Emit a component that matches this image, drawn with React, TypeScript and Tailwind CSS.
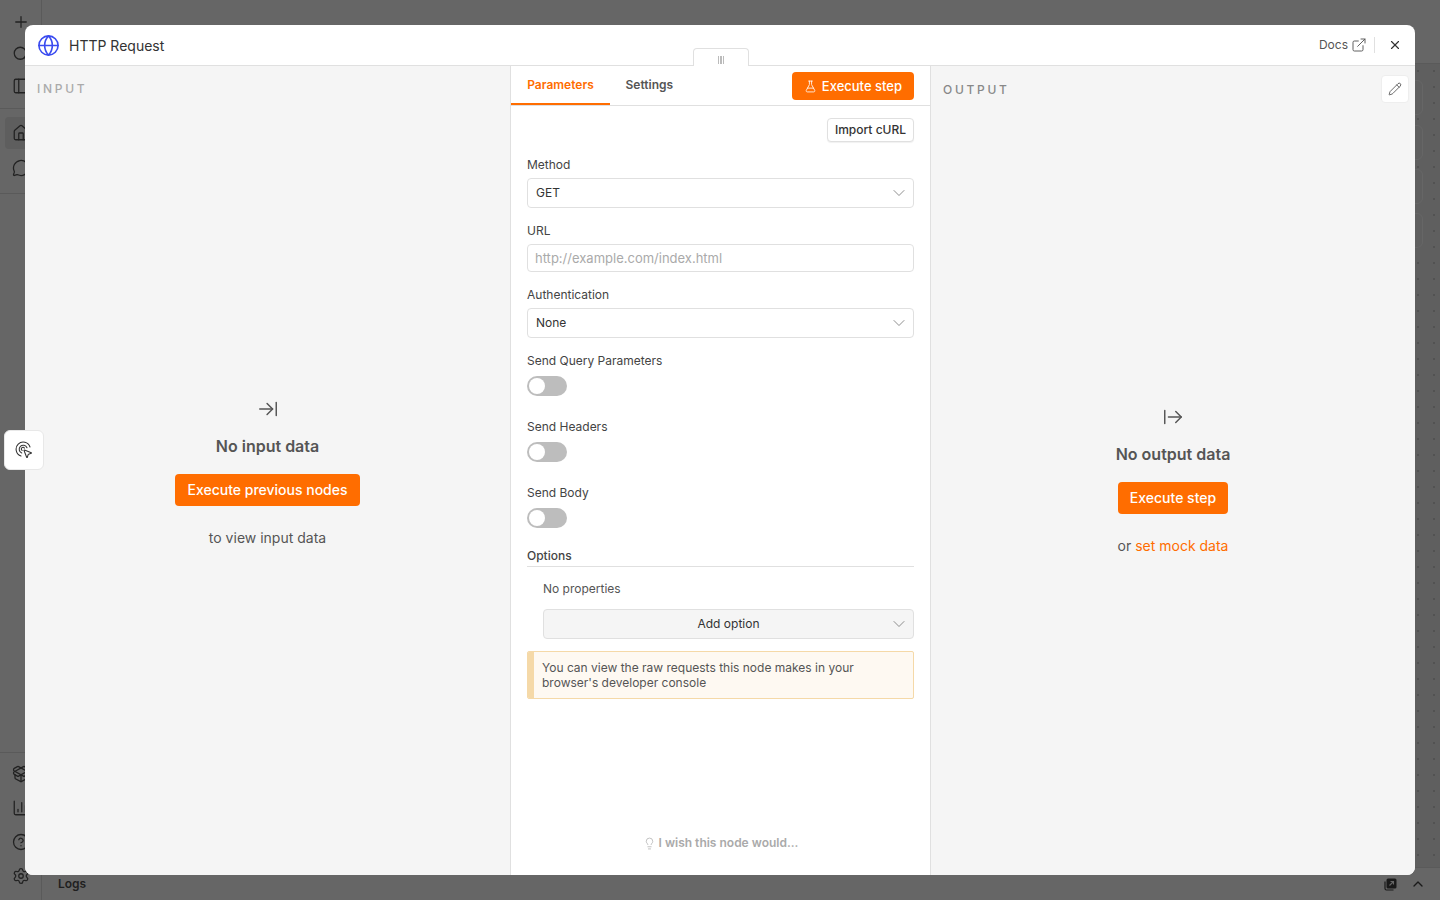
import type { ReactNode } from "react";
import {
  ChevronDown,
  ChevronUp,
  CircleHelp,
  ChartColumn,
  ExternalLink,
  FlaskConical,
  Globe,
  House,
  Lightbulb,
  MessageCircle,
  PanelLeft,
  Pencil,
  Plus,
  Search,
  Settings,
  X,
  ArrowRightToLine,
  ArrowRightFromLine,
  PackageOpen,
} from "lucide-react";

function Field({ label, children }: { label: string; children: ReactNode }) {
  return (
    <div>
      <div className="h-[20px] text-[12px] leading-[14px] text-[#444]">{label}</div>
      {children}
    </div>
  );
}

function SelectBox({ value }: { value: string }) {
  return (
    <div className="flex h-[30px] items-center justify-between rounded-[4px] border border-[#e0e0e0] bg-white pl-[8px] pr-[4px] text-[12px] text-[#333]">
      <span>{value}</span>
      <ChevronDown size={20} strokeWidth={1} className="text-[#777]" />
    </div>
  );
}

function Toggle() {
  return (
    <div className="h-[20px] w-[40px] rounded-full bg-[#bdbdbd] p-[2px]">
      <div className="h-[16px] w-[16px] rounded-full bg-white" />
    </div>
  );
}

export default function App() {
  return (
    <div className="relative flex h-[900px] w-[1440px] overflow-hidden bg-[#666] font-['Inter',sans-serif]">
      {/* page behind the modal */}
      <aside className="flex h-full w-[42px] shrink-0 flex-col items-center border-r border-[#5a5a5a] text-[#222]">
        <div className="flex w-full flex-col items-center gap-[14px] border-b border-[#5a5a5a] py-[13px]">
          <Plus size={18} strokeWidth={1.7} />
          <Search size={18} strokeWidth={1.7} />
          <PanelLeft size={18} strokeWidth={1.7} />
        </div>
        <div className="mt-[8px] flex w-full flex-col items-center gap-[3px] border-b border-[#5a5a5a] pb-[9px]">
          <div className="flex h-[32px] w-[32px] items-center justify-center rounded-[4px] bg-[#5e5e5e]">
            <House size={18} strokeWidth={1.7} />
          </div>
          <div className="flex h-[32px] w-[32px] items-center justify-center">
            <MessageCircle size={18} strokeWidth={1.7} />
          </div>
        </div>
        <div className="mt-auto flex w-full flex-col items-center gap-[16px] border-t border-[#5a5a5a] pb-[15px] pt-[12px]">
          <PackageOpen size={18} strokeWidth={1.7} />
          <ChartColumn size={18} strokeWidth={1.7} />
          <CircleHelp size={18} strokeWidth={1.7} />
          <Settings size={18} strokeWidth={1.7} />
        </div>
      </aside>

      <main className="flex min-w-0 flex-1 flex-col">
        <div className="h-[64px] shrink-0 border-b border-[#5a5a5a]" />
        {/* canvas nodes peeking out on the right */}
        <div className="relative min-h-0 flex-1 bg-[#5f5f5f] [background-image:radial-gradient(#525252_0.8px,transparent_0.8px)] [background-position:-8px_-1px] [background-size:16px_16px]">
          <div className="absolute right-[17px] top-[16px] h-[35px] w-[30px] rounded-[6px] border border-[#666] bg-[#5f5f5f]" />
          <div className="absolute right-[17px] top-[61px] h-[35px] w-[30px] rounded-[6px] border border-[#666] bg-[#5f5f5f]" />
          <div className="absolute right-[17px] top-[105px] h-[35px] w-[30px] rounded-[6px] border border-[#666] bg-[#5f5f5f]" />
          <div className="absolute right-[17px] top-[149px] h-[35px] w-[30px] rounded-[6px] border border-[#666] bg-[#5f5f5f]" />
        </div>
        {/* logs bar */}
        <div className="flex h-[33px] shrink-0 items-center justify-between border-t border-[#5a5a5a] bg-[#666] pl-[16px] pr-[14px]">
          <span className="text-[12px] font-semibold text-[#1f1f1f]">Logs</span>
          <div className="flex items-center gap-[13px] text-[#1a1a1a]">
            <svg width="13" height="13" viewBox="0 0 13 13" fill="none">
              <path d="M1 3.5v7A1.5 1.5 0 0 0 2.5 12h7" stroke="currentColor" strokeWidth="1.2" />
              <rect x="2.5" y="0.5" width="10" height="10" rx="1.5" fill="currentColor" />
              <path d="M5.5 7.5 9.5 3.5M6.5 3.5h3v3" stroke="#666" strokeWidth="1.1" />
            </svg>
            <ChevronUp size={16} strokeWidth={2} />
          </div>
        </div>
      </main>

      {/* modal */}
      <div className="absolute left-[25px] top-[25px] flex h-[850px] w-[1390px] flex-col overflow-hidden rounded-[8px] bg-white">
        <header className="flex h-[41px] shrink-0 items-center justify-between border-b border-[#e0e0e0] pl-[12px] pr-[13px]">
          <div className="flex items-center gap-[9px]">
            <Globe size={23} strokeWidth={1.7} className="text-[#3b4cf0]" />
            <span className="text-[14px] text-[#333]">HTTP Request</span>
          </div>
          <div className="flex items-center text-[#555]">
            <span className="text-[12px]">Docs</span>
            <ExternalLink size={16} strokeWidth={1.4} className="ml-[3px]" />
            <div className="ml-[7px] mr-[13px] h-[16px] w-px bg-[#e0e0e0]" />
            <X size={14} strokeWidth={2} className="text-[#333]" />
          </div>
        </header>

        <div className="flex min-h-0 flex-1">
          {/* input */}
          <section className="relative flex w-[485px] shrink-0 flex-col bg-[#f5f5f5]">
            <div className="pl-[12px] pt-[15px] text-[12px] font-medium leading-[15px] tracking-[2.7px] text-[#aaa]">INPUT</div>
            <div className="mt-[302px] flex flex-col items-center">
              <ArrowRightToLine size={22} strokeWidth={1.6} className="text-[#555]" />
              <div className="mt-[16px] text-[16px] font-semibold leading-[20px] text-[#555]">No input data</div>
              <button className="mt-[18px] flex h-[32px] items-center rounded-[4px] bg-[#ff6d00] px-[12px] pb-[1px] text-[14px] font-medium text-white">
                Execute previous nodes
              </button>
              <div className="mt-[22px] text-[14px] leading-[20px] text-[#555]">to view input data</div>
            </div>
          </section>

          {/* parameters */}
          <section className="flex w-[421px] shrink-0 flex-col border-x border-[#e0e0e0] bg-white">
            <div className="flex h-[40px] shrink-0 items-stretch justify-between border-b border-[#e0e0e0] pr-[16px]">
              <div className="flex">
                <div className="flex w-[99px] items-center justify-center border-b-2 border-[#ff6d00] text-[12px] font-semibold text-[#ff6d00]">
                  Parameters
                </div>
                <div className="ml-[15.5px] flex items-center pb-[2px] text-[12px] font-semibold text-[#555]">Settings</div>
              </div>
              <button className="mt-[6px] flex h-[28px] items-center gap-[5px] rounded-[4px] bg-[#ff6d00] px-[12px] pt-[1px] text-[13px] font-medium text-white">
                <FlaskConical size={13} strokeWidth={1.5} />
                Execute step
              </button>
            </div>

            <div className="flex flex-1 flex-col px-[16px] pt-[12px]">
              <div className="flex justify-end">
                <button className="flex h-[24px] items-center rounded-[4px] border border-[#e0e0e0] bg-white px-[7px] text-[12px] font-medium text-[#333] shadow-[0_1px_1px_rgba(0,0,0,0.06)]">
                  Import cURL
                </button>
              </div>
              <div className="mt-[16px]">
                <Field label="Method">
                  <SelectBox value="GET" />
                </Field>
              </div>
              <div className="mt-[16px]">
                <Field label="URL">
                  <div className="flex h-[28px] items-center rounded-[4px] border border-[#e0e0e0] bg-white px-[7px] pt-[1px] text-[13px] text-[#aaa]">
                    http://example.com/index.html
                  </div>
                </Field>
              </div>
              <div className="mt-[16px]">
                <Field label="Authentication">
                  <SelectBox value="None" />
                </Field>
              </div>
              <div className="mt-[16px]">
                <div className="h-[22px] text-[12px] leading-[14px] text-[#444]">Send Query Parameters</div>
                <Toggle />
              </div>
              <div className="mt-[24px]">
                <div className="h-[22px] text-[12px] leading-[14px] text-[#444]">Send Headers</div>
                <Toggle />
              </div>
              <div className="mt-[24px]">
                <div className="h-[22px] text-[12px] leading-[14px] text-[#444]">Send Body</div>
                <Toggle />
              </div>
              <div className="mt-[21px] border-b border-[#e0e0e0] pb-[3px] text-[12px] font-medium leading-[14px] text-[#444]">Options</div>
              <div className="ml-[16px]">
                <div className="mt-[15px] text-[12px] leading-[14px] text-[#555]">No properties</div>
                <div className="relative mt-[13px] flex h-[30px] items-center justify-center rounded-[4px] border border-[#e0e0e0] bg-[#f5f5f5] text-[12px] text-[#333]">
                  <span>Add option</span>
                  <ChevronDown size={20} strokeWidth={1} className="absolute right-[4px] text-[#777]" />
                </div>
              </div>
              <div className="mt-[12px] flex h-[48px] overflow-hidden rounded-[2px] border border-[#f5d9a8] bg-[#fef9f2]">
                <div className="w-[6px] shrink-0 bg-[#f5d9a8]" />
                <p className="pl-[8px] pt-[8px] text-[12px] leading-[15px] text-[#555]">
                  You can view the raw requests this node makes in your
                  <br />
                  browser's developer console
                </p>
              </div>
              <div className="mt-auto flex items-center justify-center gap-[3px] pb-[24px] text-[12px] font-semibold leading-[16px] text-[#aaa]">
                <Lightbulb size={13} strokeWidth={1.3} />
                I wish this node would...
              </div>
            </div>
          </section>

          {/* output */}
          <section className="relative flex min-w-0 flex-1 flex-col bg-[#f5f5f5]">
            <div className="pl-[12px] pt-[16px] text-[12px] font-medium leading-[15px] tracking-[2.7px] text-[#888]">OUTPUT</div>
            <button className="absolute right-[6px] top-[9px] flex h-[28px] w-[28px] items-center justify-center rounded-[4px] border border-[#eee] bg-white text-[#333]">
              <Pencil size={14} strokeWidth={1.25} />
            </button>
            <div className="mt-[309px] flex flex-col items-center">
              <ArrowRightFromLine size={22} strokeWidth={1.6} className="text-[#555]" />
              <div className="mt-[16px] text-[16px] font-semibold leading-[20px] text-[#555]">No output data</div>
              <button className="mt-[18px] flex h-[32px] items-center rounded-[4px] bg-[#ff6d00] px-[12px] pb-[1px] text-[14px] font-medium text-white">
                Execute step
              </button>
              <div className="mt-[22px] text-[14px] leading-[20px] text-[#555]">
                or <span className="text-[#ff6d00]">set mock data</span>
              </div>
            </div>
          </section>
        </div>
      </div>

      {/* drag handle on the top of the parameters panel */}
      <div className="absolute left-[693px] top-[48px] flex h-[18px] w-[56px] items-start justify-center gap-[1px] rounded-t-[4px] border border-b-0 border-[#e0e0e0] bg-white pt-[7px]">
        <span className="h-[8px] w-[1.5px] bg-[#bbb]" />
        <span className="h-[8px] w-[1.5px] bg-[#bbb]" />
        <span className="h-[8px] w-[1.5px] bg-[#bbb]" />
      </div>

      {/* floating button over the modal's left edge */}
      <div className="absolute left-[4px] top-[430px] flex h-[40px] w-[40px] items-center justify-center rounded-[6px] border border-[#e8e8e8] bg-white text-[#333]">
        <svg width="18" height="18" viewBox="0 0 24 24" fill="none" stroke="currentColor" strokeWidth="1.4" strokeLinecap="round" strokeLinejoin="round">
          <path d="M12.034 12.681a.498.498 0 0 1 .647-.647l9 3.5a.5.5 0 0 1-.033.943l-3.444 1.068a1 1 0 0 0-.66.66l-1.067 3.443a.5.5 0 0 1-.943.033z" />
          <path d="M8 20A9.49 9.49 0 1 1 20 8" />
          <path d="M9 16A5.39 5.39 0 1 1 16 9" />
          <path d="M9.5 12.5A2.2 2.2 0 1 1 12.5 9.5" />
        </svg>
      </div>
    </div>
  );
}
